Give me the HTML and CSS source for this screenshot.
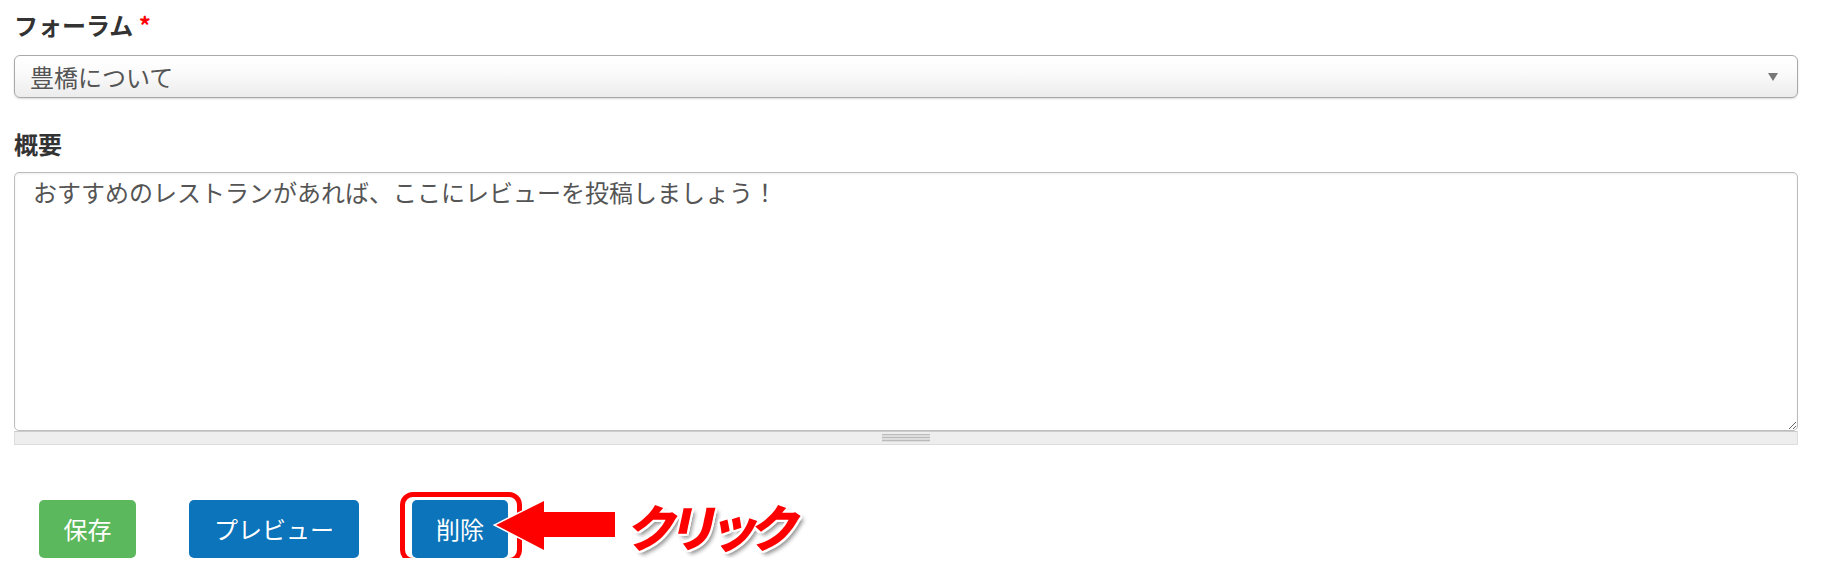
FILE: index.html
```html
<!DOCTYPE html>
<html lang="ja">
<head>
<meta charset="utf-8">
<title>フォーラム</title>
<link rel="stylesheet" href="styles.css">
</head>
<body>
<form class="form">
  <div class="field field-forum">
    <label class="label">フォーラム <span class="req">*</span></label>
    <div class="select">
      <span class="select-text">豊橋について</span>
      <span class="select-arrow"></span>
    </div>
  </div>
  <div class="field field-summary">
    <label class="label">概要</label>
    <textarea class="textarea">おすすめのレストランがあれば、ここにレビューを投稿しましょう！</textarea>
    <div class="grippie"><span class="grip"></span></div>
  </div>
  <div class="actions">
    <button type="button" class="btn btn-green">保存</button>
    <button type="button" class="btn btn-blue">プレビュー</button>
    <div class="delete-wrap">
      <button type="button" class="btn btn-blue btn-delete">削除</button>
      <span class="highlight"></span>
      <svg class="arrow" width="130" height="56" viewBox="0 0 130 56">
        <polygon points="3,27 51,3 51,14 122,14 122,39 51,39 51,52" fill="#ff0000" stroke="#ffffff" stroke-width="3" stroke-linejoin="miter" paint-order="stroke"/>
      </svg>
      <span class="click">クリック</span>
    </div>
  </div>
</form>
</body>
</html>
```

FILE: styles.css
```css
html, body {
  margin: 0;
  padding: 0;
  background: #ffffff;
}

body {
  font-family: "Noto Sans CJK JP", "Noto Sans", sans-serif;
  color: #333333;
}

.form {
  padding: 8px 23px 0 14px;
}

.field {
  display: flex;
  flex-direction: column;
}

.label {
  font-size: 24px;
  font-weight: bold;
  line-height: 34px;
  color: #333333;
}

.req {
  color: #ff0000;
}

.select {
  margin-top: 13px;
  height: 43px;
  box-sizing: border-box;
  border: 1px solid #a9a9a9;
  border-radius: 6px;
  background: linear-gradient(to bottom, #ffffff 0%, #fbfbfb 40%, #ececec 100%);
  box-shadow: 0 1px 2px rgba(0, 0, 0, 0.15);
  display: flex;
  align-items: center;
  justify-content: space-between;
  padding: 0 19px 0 15px;
}

.select-text {
  font-size: 24px;
  line-height: 30px;
  color: #555555;
}

.select-arrow {
  width: 0;
  height: 0;
  border-left: 5px solid transparent;
  border-right: 5px solid transparent;
  border-top: 8px solid #777777;
}

.field-summary {
  margin-top: 29px;
}

.textarea {
  margin-top: 11px;
  height: 259px;
  box-sizing: border-box;
  border: 1px solid #bdbdbd;
  border-radius: 5px;
  box-shadow: inset 0 1px 2px rgba(0, 0, 0, 0.08);
  padding: 4px 18px;
  font-family: "Noto Sans CJK JP", "Noto Sans", sans-serif;
  font-size: 24px;
  line-height: 30px;
  color: #555555;
  resize: vertical;
  outline: none;
}

.grippie {
  height: 14px;
  box-sizing: border-box;
  background: #eeeeee;
  border: 1px solid #dddddd;
  border-top-color: #cccccc;
  display: flex;
  justify-content: center;
  align-items: center;
}

.grip {
  width: 48px;
  height: 8px;
  background: repeating-linear-gradient(to bottom, #bbbbbb 0, #bbbbbb 1px, #dddddd 1px, #dddddd 3px);
}

.actions {
  display: flex;
  align-items: center;
  gap: 53px;
  padding-left: 25px;
  margin-top: 55px;
}

.btn {
  height: 58px;
  box-sizing: border-box;
  padding: 0 25px;
  border: none;
  border-radius: 5px;
  color: #ffffff;
  font-family: "Noto Sans CJK JP", "Noto Sans", sans-serif;
  font-size: 24px;
  line-height: 58px;
}

.btn-green {
  background: #5cb85c;
  width: 97px;
  padding: 0;
}

.btn-blue {
  background: #0c74ba;
}

.btn-delete {
  width: 96px;
  padding: 0;
}

.delete-wrap {
  position: relative;
  display: flex;
}

.highlight {
  position: absolute;
  top: -8px;
  bottom: -5px;
  left: -12px;
  right: -14px;
  border: 5px solid #ff0000;
  border-radius: 13px;
  pointer-events: none;
}

.arrow {
  position: absolute;
  left: 81px;
  top: -2px;
}

.click {
  position: absolute;
  left: 218px;
  top: -5px;
  white-space: nowrap;
  font-size: 50px;
  line-height: 60px;
  font-weight: 900;
  letter-spacing: -9px;
  color: #ff0000;
  transform: skewX(-12deg);
  text-shadow:
    -2px 0 0 #fff, 2px 0 0 #fff, 0 -2px 0 #fff, 0 2px 0 #fff,
    -2px -2px 0 #fff, 2px 2px 0 #fff, -2px 2px 0 #fff, 2px -2px 0 #fff,
    4px 4px 4px rgba(0, 0, 0, 0.45);
}
```
